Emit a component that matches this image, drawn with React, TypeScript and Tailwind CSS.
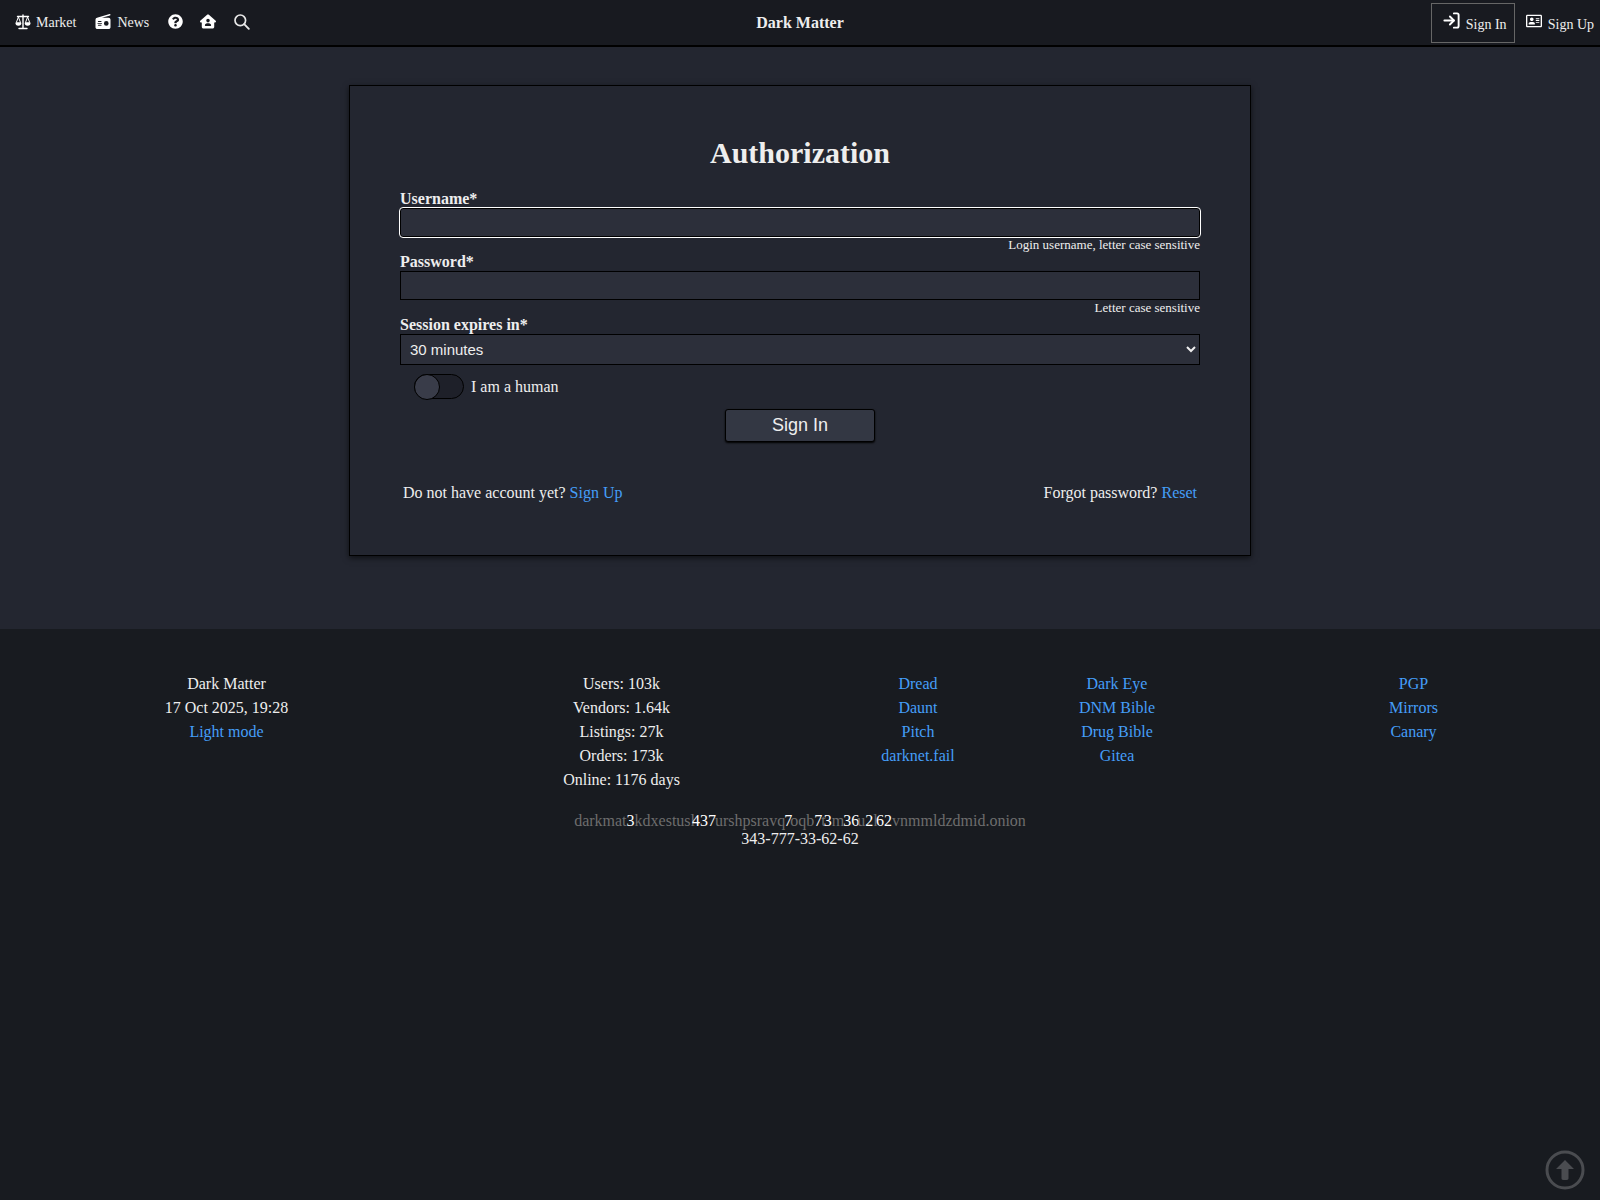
import { FaQuestionCircle, FaRegAddressCard } from "react-icons/fa";
import { FaRadio, FaHouseUser } from "react-icons/fa6";
import { FiLogIn } from "react-icons/fi";

const columns = [
  ["Dread", "Daunt", "Pitch", "darknet.fail"],
  ["Dark Eye", "DNM Bible", "Drug Bible", "Gitea"],
  ["PGP", "Mirrors", "Canary"],
];

const dim = "text-[#6d6d6d]";
const bright = "text-white";

// the onion address has its real characters picked out, some of them overlap
const onion: [string, string][] = [
  ["darkmat", dim],
  ["3", bright],
  ["kdxestusl", dim],
  ["437", `${bright} -ml-[3px]`],
  ["urshpsravq", `${dim} -ml-[1px]`],
  ["7", `${bright} -ml-[1px]`],
  ["oqb", `${dim} -ml-[2px]`],
  ["7", bright],
  ["t", `${dim} -ml-[1px]`],
  ["3", `${bright} -ml-[2px]`],
  ["m", dim],
  ["36", `${bright} -ml-[1px]`],
  ["u", `${dim} -ml-[2px]`],
  ["2", bright],
  ["l", dim],
  ["62", `${bright} -ml-[1.5px]`],
  ["vnmmldzdmid.onion", dim],
];

function ScaleIcon() {
  return (
    <svg viewBox="0 0 16 16" className="mb-[2px] h-[16px] w-[16px] text-white">
      <path d="M8 1v13M4 14.5h8M2.5 2.5h11" fill="none" stroke="currentColor" strokeWidth="1.4" strokeLinecap="round" />
      <path d="M3.4 3 1.2 8.8h4.4zM12.6 3l-2.2 5.8h4.4z" fill="none" stroke="currentColor" strokeWidth="1" strokeLinejoin="round" />
      <path d="M.4 8.8h6a3 3 0 0 1-6 0zM9.6 8.8h6a3 3 0 0 1-6 0z" fill="currentColor" />
    </svg>
  );
}

function SearchIcon() {
  return (
    <svg viewBox="0 0 16 16" className="mb-[2px] ml-[18px] h-[16px] w-[16px] text-[#e8e8e8]">
      <circle cx="6.3" cy="6.3" r="5.3" fill="none" stroke="currentColor" strokeWidth="1.7" />
      <path d="M10.2 10.2 14.8 14.8" fill="none" stroke="currentColor" strokeWidth="1.9" strokeLinecap="round" />
    </svg>
  );
}

function TextField({ label, hint, focused }: { label: string; hint: string; focused?: boolean }) {
  return (
    <div className="flex flex-col">
      <label className="h-[18px] font-bold leading-[18px]">{label}</label>
      <input
        className={`h-[29px] w-full border border-black bg-[#2c2f3a] ${focused ? "rounded-[3px] outline outline-[1.5px] outline-white" : ""}`}
      />
      <div className="h-[16px] text-right text-[13px] leading-[16px]">{hint}</div>
    </div>
  );
}

export default function App() {
  return (
    <div className="min-h-[1200px] bg-[#181b20] font-['Liberation_Serif',serif] text-[16px] text-[#eeeeee]">
      <header className="relative flex h-[47px] items-center justify-between border-b-2 border-black bg-[#181a20] text-[14px]">
        <nav className="flex items-center pl-[15px]">
          <a className="flex items-center gap-[5px]"><ScaleIcon />Market</a>
          <a className="ml-[19px] flex items-center gap-[6px]"><FaRadio className="mb-[2px] h-[15px] w-[16px] text-white" />News</a>
          <FaQuestionCircle className="mb-[2px] ml-[19px] h-[15px] w-[15px] text-white" />
          <FaHouseUser className="mb-[2px] ml-[17px] h-[15px] w-[16px] text-white" />
          <SearchIcon />
        </nav>
        <div className="absolute left-0 right-0 text-center text-[16px] font-bold">Dark Matter</div>
        <nav className="relative flex items-center pr-[6px]">
          <a className="flex h-[40px] w-[84px] items-center gap-[5px] border border-[#666666] pl-[10px]">
            <FiLogIn className="mb-[4px] h-[19px] w-[19px] text-white" strokeWidth={2.4} /><span className="mt-[4px]">Sign In</span>
          </a>
          <a className="ml-[11px] flex items-center gap-[6px]">
            <FaRegAddressCard className="mb-[4px] h-[16px] w-[16px] text-white" /><span className="mt-[4px]">Sign Up</span>
          </a>
        </nav>
      </header>

      <main className="flex h-[582px] justify-center bg-[#232630] pt-[38px]">
        <section className="h-[471px] w-[902px] border border-black px-[50px] pt-[50px] shadow-[0_2px_6px_rgba(0,0,0,0.6)]">
          <h1 className="mb-[20px] text-center text-[30px] font-bold leading-[34px]">Authorization</h1>
          <form className="flex flex-col">
            <TextField label="Username*" hint="Login username, letter case sensitive" focused />
            <TextField label="Password*" hint="Letter case sensitive" />
            <label className="h-[18px] font-bold leading-[18px]">Session expires in*</label>
            <select className="h-[31px] w-full border border-black bg-[#2c2f3a] pl-[5px] font-['Liberation_Sans',sans-serif] text-[15px]">
              <option>30 minutes</option>
            </select>
            <div className="mt-[9px] flex items-center pl-[14px]">
              <span className="relative block h-[25px] w-[50px] rounded-full border border-black bg-[#1e2029]">
                <span className="absolute -left-px -top-[1.5px] h-[26px] w-[26px] rounded-full border border-black bg-[#393c49]" />
              </span>
              <span className="ml-[7px]">I am a human</span>
            </div>
            <button type="button" className="mx-auto mt-[10px] h-[33px] w-[150px] rounded-[3px] border border-black bg-[#333743] font-['Liberation_Sans',sans-serif] text-[18px] shadow-[0_1px_2px_#000]">
              Sign In
            </button>
            <div className="mt-[39px] flex justify-between px-[3px]">
              <span>Do not have account yet? <a className="text-[#459ef8]">Sign Up</a></span>
              <span>Forgot password? <a className="text-[#459ef8]">Reset</a></span>
            </div>
          </form>
        </section>
      </main>

      <footer className="relative pt-[43px] text-center leading-[24px]">
        <div className="grid grid-cols-[375px_415px_178px_220px_373px] pl-[39px]">
          <div>
            <div>Dark Matter</div>
            <div>17 Oct 2025, 19:28</div>
            <a className="text-[#459ef8]">Light mode</a>
          </div>
          <div>
            <div>Users: 103k</div>
            <div>Vendors: 1.64k</div>
            <div>Listings: 27k</div>
            <div>Orders: 173k</div>
            <div>Online: 1176 days</div>
          </div>
          {columns.map((links) => (
            <div key={links[0]} className="flex flex-col text-[#459ef8]">
              {links.map((link) => <a key={link}>{link}</a>)}
            </div>
          ))}
        </div>
        <div className="mt-[20px] leading-[18px]">
          <div>
            {onion.map(([part, tone], i) => <span key={i} className={tone}>{part}</span>)}
          </div>
          <div>343-777-33-62-62</div>
        </div>
        <svg viewBox="0 0 40 40" className="fixed bottom-[10px] right-[15px] h-[40px] w-[40px] text-[#4a4c50]">
          <circle cx="20" cy="20" r="18" fill="none" stroke="currentColor" strokeWidth="3" />
          <path d="M20 10 L29 19 L23.5 19 L23.5 28.5 Q23.5 30 20 30 Q16.5 30 16.5 28.5 L16.5 19 L11 19 Z" fill="currentColor" />
        </svg>
      </footer>
    </div>
  );
}
